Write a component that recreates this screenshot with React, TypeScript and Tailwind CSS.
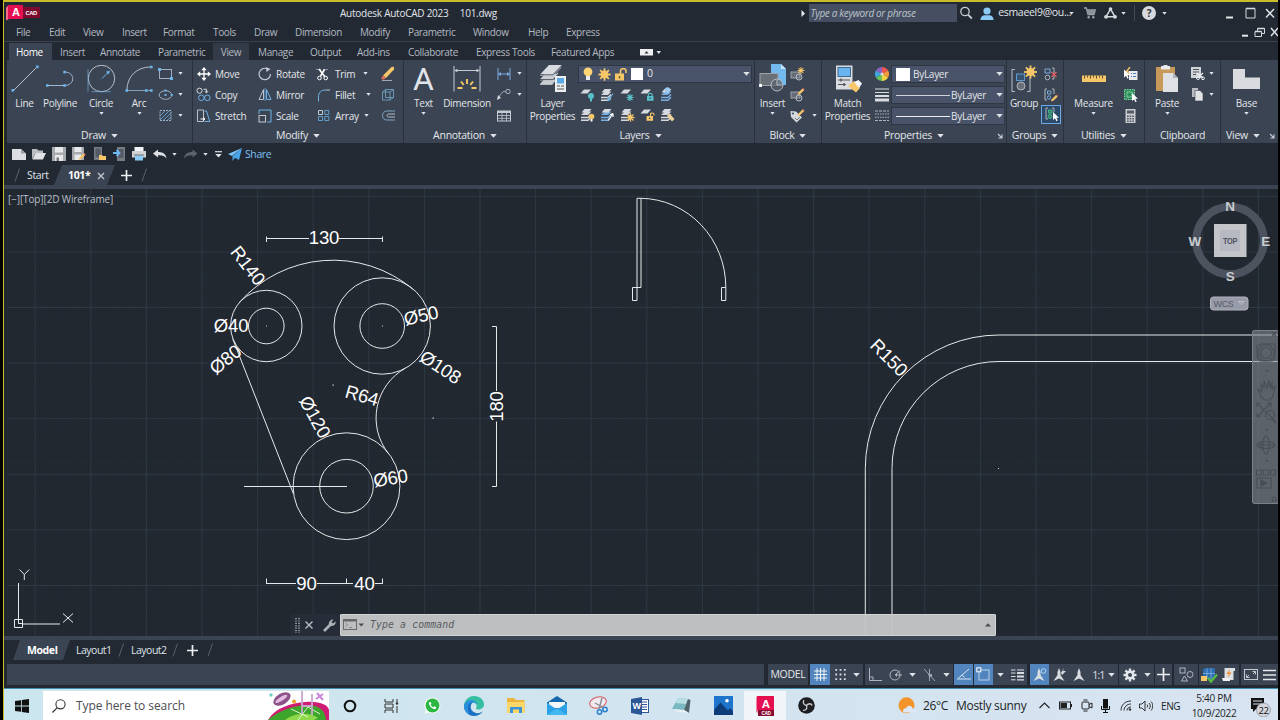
import type { ReactNode } from 'react';

type SvgProps = { w: number; h: number; children: ReactNode; className?: string };

function Svg({ w, h, children, className = '' }: SvgProps) {
  return (
    <svg width={w} height={h} viewBox={`0 0 ${w} ${h}`} fill="none" className={`shrink-0 ${className}`}>
      {children}
    </svg>
  );
}

function Caret({ big = false }: { big?: boolean }) {
  return big ? (
    <Svg w={7} h={4}><path d="M0.3 0H6.7L3.5 3.8Z" fill="#dfe3e8" /></Svg>
  ) : (
    <Svg w={5} h={3}><path d="M0.3 0H4.7L2.5 2.8Z" fill="#dfe3e8" /></Svg>
  );
}

const BLUE = '#6db3e8';
const LIGHT = '#d6dade';
const GOLD = '#f6c768';

/* ---------- title bar + menus ---------- */

const menus = [
  ['File', 'w-[33px]'], ['Edit', 'w-[34px]'], ['View', 'w-[39px]'], ['Insert', 'w-[41px]'], ['Format', 'w-[50px]'],
  ['Tools', 'w-[41px]'], ['Draw', 'w-[41px]'], ['Dimension', 'w-[65px]'], ['Modify', 'w-[48px]'],
  ['Parametric', 'w-[65px]'], ['Window', 'w-[55px]'], ['Help', 'w-[38px]'], ['Express', 'w-[50px]'],
];

const tabs = [
  ['Home', 'w-[43px] mr-px bg-[#3b4453] text-white'], ['Insert', 'w-[40px]'], ['Annotate', 'w-[58px]'],
  ['Parametric', 'w-[62px]'], ['View', 'w-[36px] bg-[#333b49]'], ['Manage', 'w-[55px]'], ['Output', 'w-[47px]'],
  ['Add-ins', 'w-[51px]'], ['Collaborate', 'w-[68px]'], ['Express Tools', 'w-[75px]'], ['Featured Apps', 'w-[70px]'],
];

function TitleBar() {
  return (
    <div className="flex h-[22px] items-center text-[#e3e6ea]">
      <div className="ml-[2px] flex items-center">
        <Svg w={34} h={16}>
          <path d="M1 1.5 3 0V14L0 15.5V3Z" fill="#f06a8c" />
          <rect x="2" width="15" height="14" fill="#e51050" />
          <rect x="17" y="2" width="17" height="11" fill="#7a0b2e" />
          <text x="9.8" y="11" textAnchor="middle" fontSize="11" fontWeight="700" fill="#fff" fontFamily="Liberation Sans, sans-serif">A</text>
          <text x="25.2" y="9.7" textAnchor="middle" fontSize="5.8" fontWeight="700" fill="#fff" fontFamily="Liberation Sans, sans-serif">CAD</text>
        </Svg>
      </div>
      <span className="ml-[300px] w-[121px] tracking-[-0.25px]">Autodesk AutoCAD 2023</span>
      <span className="w-[345px] tracking-[-0.3px]">101.dwg</span>
      <Svg w={4} h={7} className="-ml-px"><path d="M0.5 0 4 3.5 0.5 7Z" fill="#e8eaed" /></Svg>
      <div className="ml-[4px] flex h-[18px] w-[150px] items-center bg-[#454f61] pl-[2px] italic tracking-[-0.35px] text-[#bcc2cb]">Type a keyword or phrase</div>
      <Svg w={14} h={14} className="ml-[2px]">
        <circle cx="6" cy="5.5" r="4.2" stroke="#c8ccd1" strokeWidth="1.3" /><path d="m9 8.7 3.8 3.8" stroke="#c8ccd1" strokeWidth="1.8" />
      </Svg>
      <Svg w={14} h={13} className="ml-[7px]">
        <circle cx="7" cy="4" r="3.6" fill="#8ccaf6" /><path d="M0.5 13C0.5 9.5 3 8.2 5 8.2H9C11 8.2 13.5 9.5 13.5 13Z" fill="#8ccaf6" />
      </Svg>
      <span className="ml-[4px] w-[71px] text-[10.5px] tracking-[-0.3px]">esmaeel9@ou...</span>
      <Caret />
      <Svg w={12} h={12} className="ml-[10px]">
        <path d="M0 1H2.3L4 7.5H10L11.3 2.8H3" stroke="#9da3ab" strokeWidth="1.3" /><path d="M3 3H11L9.8 7H4Z" fill="#8d939b" />
        <circle cx="4.7" cy="10.3" r="1.2" fill="#9da3ab" /><circle cx="9.3" cy="10.3" r="1.2" fill="#9da3ab" />
      </Svg>
      <Svg w={13} h={12} className="ml-[8px]">
        <path d="M6.5 2 2 9.8H11Z" stroke="#d6d9dd" strokeWidth="1.5" /><circle cx="6.5" cy="2" r="1.8" fill="#d6d9dd" />
        <circle cx="2" cy="9.8" r="1.9" fill="#d6d9dd" /><circle cx="11" cy="9.8" r="1.9" fill="#d6d9dd" />
      </Svg>
      <div className="ml-[4px]"><Caret /></div>
      <div className="ml-[8px] h-[16px] w-px bg-[#414a58]" />
      <div className="ml-[7px] flex h-[14px] w-[14px] items-center justify-center rounded-full bg-[#d6d9dd] text-[10px] font-bold text-[#333]">?</div>
      <div className="ml-[6px]"><Caret /></div>
      <Svg w={52} h={14} className="ml-[59px]">
        <path d="M0 11.5H7" stroke="#e3e6ea" strokeWidth="2" /><path d="M20 2.5H29V12H20Z" stroke="#d6d9dd" strokeWidth="1" /><path d="M20 2.5H29" stroke="#d6d9dd" strokeWidth="1.6" />
        <path d="M40 3 48 11.5M48 3 40 11.5" stroke="#e3e6ea" strokeWidth="1.4" />
      </Svg>
    </div>
  );
}

function MenuBar() {
  return (
    <div className="flex h-[18px] items-center border-b border-[#3a424f] pl-[12px] tracking-[-0.37px] text-[#b3b9c2]">
      {menus.map(([name, cls]) => <span key={name} className={`${cls} shrink-0 pb-px`}>{name}</span>)}
      <Svg w={36} h={12} className="ml-auto">
        <path d="M0 8.7H6" stroke="#e3e6ea" strokeWidth="2" />
        <path d="M15.5 4V1.5H22.5V6.5H20" stroke="#d6d9dd" /><path d="M13 4.5H19.5V9.5H13Z" stroke="#d6d9dd" /><path d="M13 4.5H19.5M15.5 1.5H22.5" stroke="#d6d9dd" strokeWidth="1.6" />
        <path d="m29 1 7 8M36 1 29 9" stroke="#e3e6ea" strokeWidth="1.4" />
      </Svg>
    </div>
  );
}

function RibbonTabs() {
  return (
    <div className="flex h-[20px] items-end pl-[5px] tracking-[-0.35px] text-[#b3b9c2]">
      <div className="flex h-[17px]">
        {tabs.map(([name, cls], i) => (
          <span key={name} className={`${cls} flex shrink-0 items-center pt-[2px] ${i === 4 ? 'justify-center' : 'pl-[7px]'} ${i === 5 ? '-mr-px pl-[9px]' : ''}`}>{name}</span>
        ))}
        <Svg w={22} h={17} className="ml-[26px]">
          <rect y="6" width="13" height="6.5" fill="#eceef0" /><path d="m4.5 10.6 2-2.6 2 2.6Z" fill="#333" /><path d="M16.5 8H21L18.8 11Z" fill="#dfe3e8" />
        </Svg>
      </div>
    </div>
  );
}

/* ---------- ribbon building blocks ---------- */

function Panel({ title, className, children, arrow = true, launcher = false }: { title: string; className: string; children: ReactNode; arrow?: boolean; launcher?: boolean }) {
  return (
    <div className={`flex h-[83px] shrink-0 flex-col border-r border-[#2a313c] ${className}`}>
      <div className="flex h-[67px]">{children}</div>
      <div className="relative flex h-[16px] items-center justify-center gap-[5px] pt-[2px] text-[10.5px]">
        {title}
        {arrow && <Caret big />}
        {launcher && (
          <Svg w={6} h={6} className="absolute right-[3px]"><path d="M1 1 4.5 4.5M5 1.5V5H1.5" stroke="#c9ced6" strokeWidth="1.1" /></Svg>
        )}
      </div>
    </div>
  );
}

function Big({ icon, label, label2, className, caret = false }: { icon: ReactNode; label: string; label2?: string; className: string; caret?: boolean }) {
  return (
    <div className={`flex shrink-0 flex-col items-center pt-[4px] ${className}`}>
      <div className="flex h-[32px] items-start justify-center">{icon}</div>
      <span className="h-[13px] leading-[14px]">{label}</span>
      {label2 && <span className="h-[13px] leading-[14px]">{label2}</span>}
      {caret && <div className="mt-[3px]"><Caret /></div>}
    </div>
  );
}

function Stack({ className, children }: { className: string; children: ReactNode }) {
  return <div className={`flex shrink-0 flex-col pt-[3px] ${className}`}>{children}</div>;
}

function Row({ icon, label, caret, className = '' }: { icon: ReactNode; label?: string; caret?: boolean; className?: string }) {
  return (
    <div className={`flex h-[21px] items-center ${className}`}>
      <span className="flex w-[15px] shrink-0 justify-center">{icon}</span>
      {label && <span className="ml-[4px] shrink-0 pt-px">{label}</span>}
      {caret && <span className="ml-auto"><Caret /></span>}
    </div>
  );
}

/* stack of sheets used by most of the layer tools */
function Sheets({ badge, single = false, tint = LIGHT }: { badge: ReactNode; single?: boolean; tint?: string }) {
  return (
    <Svg w={15} h={15}>
      {!single && <path d="M1 10.5H8L11 7.5M1 13.2H8L11 10.2" stroke={tint} strokeWidth="1.4" />}
      {!single && <path d="M1 8H8L11.5 4.5H5Z" fill={tint} />}
      <path d={single ? 'M0.5 6.5 4 2.5H11L7.5 6.5Z' : 'M1.5 5.5 4.5 2H11.5L8.5 5.5Z'} fill={LIGHT} />
      {badge}
    </Svg>
  );
}

function Lock({ color, x, y, open = false }: { color: string; x: number; y: number; open?: boolean }) {
  return (
    <g transform={`translate(${x} ${y})`}>
      <rect y="3" width="6.5" height="4.8" fill={color} />
      <path d={open ? 'M4 3V1.2C4 -0.4 7.5 -0.4 7.5 1.2V2.5' : 'M1.3 3V1.5C1.3 0 5.2 0 5.2 1.5V3'} stroke={color} strokeWidth="1.1" />
      <circle cx="3.2" cy="5.3" r="0.8" fill="#3b4453" />
    </g>
  );
}

function Sun({ cx, cy, r, color = GOLD }: { cx: number; cy: number; r: number; color?: string }) {
  return (
    <g stroke={color} strokeWidth={r * 0.28}>
      <circle cx={cx} cy={cy} r={r * 0.5} fill={color} stroke="none" />
      {[0, 45, 90, 135].map((a) => (
        <path key={a} d={`M${cx - r} ${cy}H${cx + r}`} transform={`rotate(${a} ${cx} ${cy})`} />
      ))}
    </g>
  );
}

function Pencil({ x, y }: { x: number; y: number }) {
  return (
    <g transform={`translate(${x} ${y})`}>
      <path d="M0 7 0.8 4.8 5 0.6 6.6 2.2 2.3 6.3Z" fill={GOLD} /><path d="M5 0.6 5.8 0 7.2 1.4 6.6 2.2Z" fill="#e3705f" />
    </g>
  );
}

function Cursor({ x, y }: { x: number; y: number }) {
  return <path transform={`translate(${x} ${y})`} d="M0 0V8L2 6.3 3.4 9.2 4.7 8.5 3.4 5.8H6Z" fill="#fff" />;
}

function Combo({ children, className }: { children: ReactNode; className: string }) {
  return (
    <div className={`flex h-[18px] items-center border border-[#2f3744] bg-[#49546a] ${className}`}>
      {children}
      <span className="ml-auto mr-[1px]"><Caret big /></span>
    </div>
  );
}

/* ---------- ribbon panels ---------- */

function DrawPanel() {
  return (
    <Panel title="Draw" className="w-[186px]">
      <Big className="w-[35px]" label="Line" icon={
        <Svg w={28} h={28}><path d="M2 27 26 3" stroke="#b8c0ca" /><rect x="0.5" y="25" width="2.6" height="2.6" fill={BLUE} /><rect x="25" y="1.5" width="2.6" height="2.6" fill={BLUE} /></Svg>
      } />
      <Big className="w-[36px]" label="Polyline" icon={
        <Svg w={28} h={28}><path d="M1 21.5H18.5C29.5 21.5 29.5 8 18.5 8" stroke="#9fb7cf" /><rect y="20.2" width="2.6" height="2.6" fill={BLUE} /><rect x="17.3" y="20.2" width="2.6" height="2.6" fill={BLUE} /><rect x="17.3" y="6.8" width="2.6" height="2.6" fill={BLUE} /></Svg>
      } />
      <Big className="w-[46px]" label="Circle" caret icon={
        <Svg w={29} h={29}><circle cx="14.5" cy="14.5" r="13.2" stroke="#b8c0ca" /><path d="M1 5V27.5M4.5 27.7H24" stroke={BLUE} strokeOpacity=".65" /><path d="m15 14.5 6.5-6.5" stroke={BLUE} /><path d="M23 6.5 19 7.7 21.8 10.5Z" fill={BLUE} /></Svg>
      } />
      <Big className="w-[30px]" label="Arc" caret icon={
        <Svg w={28} h={28}><path d="M2 26.5C2 13 11 3 26 3" stroke="#b8c0ca" /><path d="M2 26.5H25" stroke="#8da7bf" strokeWidth=".9" /><rect x="25" y="1.7" width="2.6" height="2.6" fill={BLUE} /><rect x="0.5" y="25.2" width="2.6" height="2.6" fill={BLUE} /><rect x="20" y="25.2" width="2.6" height="2.6" fill={BLUE} /><rect x="25" y="25.2" width="2.6" height="2.6" fill={BLUE} /></Svg>
      } />
      <Stack className="ml-[4px] w-[25px]">
        <Row caret icon={<Svg w={15} h={12}><rect x="1.5" y="1.5" width="12" height="9" stroke="#9eb0c2" /><path d="M0 0H3V3H0ZM12 9H15V12H12Z" fill={BLUE} /></Svg>} />
        <Row caret icon={<Svg w={15} h={12}><ellipse cx="7.5" cy="6" rx="6.3" ry="4.3" stroke="#9eb0c2" /><path d="M6.5 5H8.5V7H6.5ZM12.7 5H14.7V7H12.7ZM6.5 .5H8.5V2.5H6.5Z" fill={BLUE} /></Svg>} />
        <Row caret icon={<Svg w={15} h={13}><rect x="2" y="1.5" width="11" height="10" stroke="#9eb0c2" strokeDasharray="2 1" /><path d="M2 7 7 2M2 11 11 2M5 11.5 13 4M9 11.5 13 8" stroke={BLUE} strokeWidth=".8" /></Svg>} />
      </Stack>
    </Panel>
  );
}

function ModifyPanel() {
  return (
    <Panel title="Modify" className="w-[211px]">
      <Stack className="ml-[3px] w-[61px]">
        <Row label="Move" icon={<Svg w={14} h={14}><path d="M7 1.5V12.5M1.5 7H12.5" stroke="#fff" strokeWidth="1.3" /><path d="M7 0 9.7 3.2H4.3ZM7 14 4.3 10.8H9.7ZM0 7 3.2 4.3V9.7ZM14 7 10.8 9.7V4.3Z" fill="#fff" /></Svg>} />
        <Row label="Copy" icon={<Svg w={15} h={15}><circle cx="3.5" cy="3.7" r="2.6" stroke={LIGHT} /><circle cx="5.3" cy="10.8" r="2.8" stroke={BLUE} /><circle cx="11.3" cy="10.8" r="2.8" stroke={BLUE} /><path d="M7.5 2.3H10.5V5M9 4.2 10.5 6 12 4.2" stroke={LIGHT} /></Svg>} />
        <Row label="Stretch" icon={<Svg w={15} h={14}><path d="M1.5 1H7.5V12.5H1.5Z" stroke="#b9c1ca" /><path d="M8.5 2H10.5L13.8 12.5H8.5" stroke={BLUE} /><path d="M4.5 10H8M7 8.3 9 10 7 11.7" stroke="#fff" /></Svg>} />
      </Stack>
      <Stack className="w-[59px]">
        <Row label="Rotate" icon={<Svg w={14} h={14}><path d="M9 1.7A5.7 5.7 0 1 0 12.5 7" stroke="#c3cad2" strokeWidth="1.2" /><path d="M8 0 12.5 2 8.5 5Z" fill="#c3cad2" /></Svg>} />
        <Row label="Mirror" icon={<Svg w={14} h={13}><path d="M5.5 1.5V11.5H1Z" stroke="#b9c1ca" /><path d="M8.5 1.5V11.5H13Z" stroke={BLUE} /><path d="M7 0V13" stroke={BLUE} strokeWidth=".7" /></Svg>} />
        <Row label="Scale" icon={<Svg w={14} h={14}><path d="M1 5V1H13V13H9" stroke={BLUE} /><rect x="1" y="6.5" width="6.5" height="6.5" stroke="#c3cad2" /></Svg>} />
      </Stack>
      <Stack className="w-[53px]">
        <Row label="Trim" caret className="pr-px" icon={<Svg w={15} h={14}><path d="M0 2.5H14" stroke="#8494a5" strokeDasharray="5 2" /><path d="m3 2 6 8M8.5 2.5 4.5 9" stroke="#fff" strokeWidth="1.6" /><circle cx="3.5" cy="11" r="1.8" stroke="#fff" /><circle cx="9.7" cy="11" r="1.8" stroke="#fff" /></Svg>} />
        <Row label="Fillet" caret className="-mr-[2px]" icon={<Svg w={14} h={14}><path d="M1.5 13.5V9C1.5 4.5 4 2 8.5 2" stroke={BLUE} /><path d="M8.5 2H13" stroke="#b9c1ca" /></Svg>} />
        <Row label="Array" caret icon={<Svg w={14} h={13}><path d="M1.5 1.5H5.5V5.5H1.5Z" stroke="#c3cad2" /><path d="M7.8 1.5H11.8V5.5H7.8ZM1.5 7.5H5.5V11.5H1.5ZM7.8 7.5H11.8V11.5H7.8Z" stroke={BLUE} strokeOpacity=".8" /></Svg>} />
      </Stack>
      <Stack className="ml-[11px] w-[16px]">
        <Row icon={<Svg w={15} h={15}><path d="M3 9.5 11.5 1 14 0.8V3.5L6 12Z" fill={GOLD} /><path d="M3 9.5 6 12 4 13.5H2L1.2 12Z" fill="#e66a58" /><path d="M2 14.5H12" stroke="#b9c1ca" strokeWidth=".8" /></Svg>} />
        <Row icon={<Svg w={14} h={14}><path d="M1.5 4H9V12H1.5ZM4.5 1.5H12.5V9.5L9 12M1.5 4 4.5 1.5M9 4 12.5 1.5M4.5 1.5V9.5H12.5" stroke="#6fa0bf" strokeWidth=".9" /></Svg>} />
        <Row icon={<Svg w={14} h={11}><path d="M14 1H6C0 1 0 10 6 10H14" stroke="#7fa2c0" /><path d="M14 4H7.5C5.5 4 5.5 7 7.5 7H14" stroke="#b5bec8" /></Svg>} />
      </Stack>
    </Panel>
  );
}

function AnnotationPanel() {
  return (
    <Panel title="Annotation" className="w-[123px]">
      <Big className="w-[39px]" label="Text" caret icon={<span className="font-['Roboto',sans-serif] text-[32px] leading-[30px] tracking-normal text-[#e1e4e8]">A</span>} />
      <Big className="w-[48px]" label="Dimension" icon={
        <Svg w={28} h={28}>
          <path d="M1 2V27.5M27 2V27.5M2 6.5H26" stroke="#c3cad2" /><path d="M1 6.5 4.5 4.7V8.3ZM27 6.5 23.5 4.7V8.3Z" fill="#c3cad2" />
          <path d="M14 15V20M8 17.5 10.7 21M20 17.5 17.3 21M4.5 24H9.5M18.5 24H23.5" stroke={GOLD} strokeWidth="1.9" />
        </Svg>
      } />
      <Stack className="ml-[5px] w-[26px]">
        <Row caret icon={<Svg w={14} h={12}><path d="M1 0V12M13 0V12M1 6H13" stroke="#7ba9de" /><path d="M1 6 4 4V8ZM13 6 10 4V8Z" fill="#7ba9de" /></Svg>} />
        <Row caret icon={<Svg w={14} h={13}><circle cx="11" cy="3.5" r="2.2" stroke="#aab2bc" /><path d="M9 4C6 2 4 6 2 9" stroke="#aab2bc" /><path d="m0 12 1-5 3 3Z" fill="#d3d7dc" /></Svg>} />
        <Row icon={<Svg w={14} h={12}><rect x=".5" y="1" width="13" height="10" stroke="#c3cad2" /><path d="M0 2H14" stroke="#c3cad2" strokeWidth="2" /><path d="M0 5.5H14M0 8.3H14M5 2V11M9.5 2V11" stroke="#c3cad2" strokeWidth=".8" /></Svg>} />
      </Stack>
    </Panel>
  );
}

function LayersPanel() {
  const teal = '#59bfc8';
  return (
    <Panel title="Layers" className="w-[228px]">
      <Big className="w-[51px]" label="Layer" label2="Properties" icon={
        <Svg w={28} h={30}>
          <path d="M1 20.5H13L17 15M1 16H13L19 9M1 11.5H14L22 3" stroke="#b3b8be" strokeWidth="1.2" />
          <path d="M1 20 5 15.5H17L13 20ZM1 15.3 6 10H19L14 15.3Z" fill="#c9cdd2" /><path d="M1 10.5 10 1H23L14 10.5Z" fill="#d9dce0" />
          <path d="M1 10.8H14L23 1.4M1 15.6H14L19 10.3" stroke="#3b4453" strokeWidth=".8" />
          <rect x="16" y="12" width="11" height="16" fill="#eceef0" /><rect x="18" y="14" width="7" height="5.5" fill="#58a9e6" /><path d="M18 22H21M22 22H25M18 25H25" stroke="#555" strokeWidth="1.1" />
        </Svg>
      } />
      <div className="flex flex-col pt-[5px]">
        <Combo className="w-[174px] pl-[4px]">
          <Svg w={10} h={14}><circle cx="5" cy="4.8" r="4.4" fill="#ffd475" /><path d="M3 9H7V13H3Z" fill="#e8eaed" /></Svg>
          <Svg w={13} h={13} className="ml-[5px]"><Sun cx={6.5} cy={6.5} r={6.2} /><circle cx="6.5" cy="6.5" r="4" fill={GOLD} /></Svg>
          <Svg w={14} h={13} className="ml-[3px]"><rect x="1" y="5.5" width="9" height="7" fill={GOLD} /><path d="M6.5 6V3C6.5 0 12 0 12 3V5" stroke={GOLD} strokeWidth="1.6" /><path d="M5.5 8V10.5" stroke="#6b5a2c" strokeWidth="1.4" /></Svg>
          <span className="ml-[3px] h-[12px] w-[12px] bg-white" /><span className="ml-[4px] text-[10.5px]">0</span>
        </Combo>
        <div className="mt-px flex h-[20px] items-center gap-[5px] pl-[2px]">
          <Sheets single badge={<g><circle cx="11" cy="9" r="3" fill={teal} /><path d="M11 11V14.5" stroke={teal} strokeWidth="2" /></g>} />
          <Sheets badge={<path d="M8 13.5 13 6.5M8 13.5V10M8 13.5 11 12.5" stroke={BLUE} strokeWidth="1.2" />} />
          <Sheets single badge={<g stroke={teal} strokeWidth="1.2"><path d="M10 7V14M6.5 10.5H13.5M7.5 8 12.5 13M12.5 8 7.5 13" /></g>} />
          <Sheets single badge={<Lock color={teal} x={7} y={6} />} />
          <Sheets tint="#78afe0" badge={<circle cx="7.5" cy="3" r="2.7" fill="#9cc9ef" />} />
        </div>
        <div className="flex h-[21px] items-center gap-[5px] pl-[2px]">
          <Sheets badge={<g><circle cx="11.5" cy="9.5" r="2.8" fill={GOLD} /><path d="M11.5 12V14.5" stroke="#fff" strokeWidth="2" /></g>} />
          <Sheets tint="#78afe0" badge={<path d="M8 13.5 13 6.5M13 6.5V10M13 6.5 10 7.5" stroke="#fff" strokeWidth="1.2" />} />
          <Sheets badge={<Sun cx={10.5} cy={10.5} r={4.2} />} />
          <Sheets single badge={<Lock color={GOLD} x={6.5} y={6} open />} />
          <Sheets badge={<path d="M7 9 9.5 6.5 14.5 12 12 14.5Z" fill="#ecd29b" />} />
        </div>
      </div>
    </Panel>
  );
}

function BlockPanel() {
  return (
    <Panel title="Block" className="w-[67px]">
      <Big className="w-[35px]" label="Insert" caret icon={
        <Svg w={28} h={28}>
          <path d="M12 0H22L27 5V21H12Z" fill="#73b9ee" /><path d="M22 0V5H27Z" fill="#c5e2f8" />
          <rect x="1" y="9.5" width="18" height="12" fill="#6b7078" stroke="#9da2a9" /><circle cx="18" cy="21" r="6" fill="#5b616b" fillOpacity=".7" stroke="#b9bec5" /><path d="M18 16V21H23" stroke="#b9bec5" /><rect y="20" width="3" height="3" fill="#fff" />
        </Svg>
      } />
      <Stack className="w-[28px]">
        <Row icon={<Svg w={15} h={14}><rect x="1" y="5" width="9" height="6" fill="#666c75" stroke="#9da2a9" /><circle cx="9" cy="10" r="3" stroke="#b9bec5" /><Sun cx={11} cy={3.5} r={3.5} /></Svg>} />
        <Row icon={<Svg w={15} h={14}><rect x="1" y="4" width="9" height="6" fill="#666c75" stroke="#9da2a9" /><circle cx="9" cy="10" r="3" stroke="#b9bec5" /><Pencil x={7.5} y={0} /></Svg>} />
        <Row caret className="pr-px" icon={<Svg w={15} h={14}><path d="M0.5 2 6 2.5 12 8.5 6.5 13.5 1 8Z" fill="#d6d9dd" /><circle cx="3" cy="4.5" r="1" fill="#3b4453" /><path d="m5 9 2 2 3-3" stroke="#777" /><Pencil x={7.5} y={0} /></Svg>} />
      </Stack>
    </Panel>
  );
}

function PropertiesPanel() {
  return (
    <Panel title="Properties" className="w-[185px]" launcher>
      <Big className="w-[51px]" label="Match" label2="Properties" icon={
        <Svg w={28} h={29}>
          <rect x="2" y="1.5" width="16.5" height="24" fill="#d9dce0" /><rect x="4" y="3.5" width="12.5" height="9" fill="#69b4ee" stroke="#3f6a92" /><path d="M4 16H16M4 20.5H12" stroke="#555" /><path d="M7 14.5V17.5M10 19V22" stroke="#555" strokeWidth="1.5" />
          <path d="M14 22 20 17 26 24 22 28.5Z" fill={GOLD} /><path d="M20 18 24.5 16 28 19.5 25 24Z" fill="#f3f4f5" />
        </Svg>
      } />
      <div className="flex w-[18px] flex-col items-center pt-[3px]">
        <div className="flex h-[21px] items-center">
          <Svg w={14} h={14}>
            {['#f0554e', '#f59a3c', '#f3d544', '#67c05a', '#3fa6d8', '#8a62c8'].map((c, i) => (
              <path key={c} d="M7 7V0A7 7 0 0 1 13.06 3.5Z" fill={c} transform={`rotate(${i * 60} 7 7)`} />
            ))}
            <circle cx="7" cy="7" r="1.6" fill="#d6d9dd" />
          </Svg>
        </div>
        <div className="flex h-[21px] items-center"><Svg w={14} h={14}><path d="M0 1H14M0 4.5H14" stroke="#d9dce0" /><path d="M0 8H14" stroke="#d9dce0" strokeWidth="2" /><path d="M0 12H14" stroke="#d9dce0" strokeWidth="3" /></Svg></div>
        <div className="flex h-[21px] items-center"><Svg w={14} h={12}><path d="M0 1H14M0 10.5H14" stroke="#aeb5be" strokeDasharray="3 1" /><path d="M0 4H14M0 7.3H14" stroke="#aeb5be" strokeDasharray="1.5 1" /></Svg></div>
      </div>
      <div className="flex flex-col gap-[3px] pt-[5px]">
        <Combo className="w-[114px] pl-[4px]"><span className="h-[13px] w-[14px] bg-white" /><span className="ml-[3px]">ByLayer</span></Combo>
        <Combo className="w-[114px] pl-[4px]"><span className="h-px w-[54px] bg-[#cfd3d8]" /><span className="ml-[1px]">ByLayer</span></Combo>
        <Combo className="w-[114px] pl-[4px]"><span className="h-px w-[54px] bg-[#eceef0]" /><span className="ml-[1px]">ByLayer</span></Combo>
      </div>
    </Panel>
  );
}

function GroupsPanel() {
  return (
    <Panel title="Groups" className="w-[57px]">
      <Big className="w-[34px]" label="Group" icon={
        <Svg w={27} h={29}>
          <path d="M4 5.5H1V27.5H4M16 27.5H19V13" stroke="#aeb5be" strokeWidth="1.1" /><rect x="5.5" y="10" width="8" height="6.5" fill="#35526f" stroke="#5c9ad0" /><circle cx="10" cy="22" r="4" fill="#6b7078" stroke="#aeb5be" /><Sun cx={19.5} cy={8} r={6.5} /><circle cx="19.5" cy="8" r="4" fill={GOLD} />
        </Svg>
      } />
      <Stack className="w-[20px] items-center">
        <Row icon={<Svg w={14} h={14}><path d="M1 2H6V6H1Z" stroke="#7ba9de" /><circle cx="3.5" cy="10.5" r="2.3" stroke="#aeb5be" /><path d="M8 1H10V12H8" stroke="#aeb5be" /><path d="m7.5 5 5 5M12.5 5 7.5 10" stroke="#e0585f" strokeWidth="1.4" /></Svg>} />
        <Row icon={<Svg w={14} h={14}><path d="M3 1H1V12H3M8 1H10V6" stroke="#aeb5be" /><path d="M3.5 3H7V6H3.5Z" stroke="#7ba9de" /><circle cx="5" cy="9.5" r="1.7" stroke="#7ba9de" /><Pencil x={7} y={6.5} /></Svg>} />
        <div className="flex h-[19px] w-[20px] shrink-0 items-center justify-center border border-[#69aae6] bg-[#2c4a68]">
          <Svg w={15} h={15}><path d="M4 1H2V12H4M8 1H10V5" stroke="#aeb5be" /><path d="M4.5 3H8V6H4.5Z" fill="#2f7f62" stroke="#4fb58c" /><circle cx="6" cy="9.5" r="2" fill="#2f7f62" stroke="#4fb58c" /><Cursor x={9} y={5} /></Svg>
        </div>
      </Stack>
    </Panel>
  );
}

function UtilitiesPanel() {
  return (
    <Panel title="Utilities" className="w-[81px]">
      <Big className="w-[59px]" label="Measure" caret icon={
        <Svg w={24} h={28}><rect y="11.5" width="24" height="6.5" fill="#f6c768" /><path d="M2.5 11.5V14.5M5.5 11.5V13.5M8.5 11.5V14.5M11.5 11.5V13.5M14.5 11.5V14.5M17.5 11.5V13.5M20.5 11.5V14.5" stroke="#5e5030" /></Svg>
      } />
      <Stack className="w-[18px]">
        <Row icon={<Svg w={15} h={14}><path d="M7 0 3 5H6L4 8" stroke={GOLD} strokeWidth="1.4" /><rect x="6" y="4" width="8.5" height="9" fill="#e9ebee" /><path d="M8 6.5H9M10 6.5H13M8 9.5H9M10 9.5H13" stroke="#4b7eb0" /><Cursor x={1} y={2.5} /></Svg>} />
        <Row icon={<Svg w={15} h={14}><rect x="1.5" y="1.5" width="10" height="10" fill="#2f8f5b" stroke="#7fd3a2" strokeDasharray="1.5 1" /><rect x="4" y="4" width="5" height="5" stroke="#9be0b8" strokeWidth=".7" /><Cursor x={9} y={5} /></Svg>} />
        <Row icon={<Svg w={11} h={14}><rect x=".5" width="10" height="14" fill="#c9ccd1" /><rect x="2" y="1.5" width="7" height="3" fill="#555b65" /><path d="M2 7.2H9M2 9.7H9M2 12.2H9" stroke="#555b65" strokeWidth="1.4" strokeDasharray="1.7 .9" /></Svg>} />
      </Stack>
    </Panel>
  );
}

function ClipboardPanel() {
  return (
    <Panel title="Clipboard" className="w-[76px]" arrow={false}>
      <Big className="w-[44px]" label="Paste" caret icon={
        <Svg w={23} h={29}><rect y="3" width="19" height="24" fill="#c89a5a" /><path d="M5 2H7C7 .5 12 .5 12 2H14V5.5H5Z" fill="#e9ebee" /><path d="M7 9H17L22 14V28H7Z" fill="#dfe1e5" /><path d="M17 9V14H22Z" fill="#b0b4ba" /></Svg>
      } />
      <Stack className="ml-[1px] w-[26px]">
        <Row caret className="pr-[2px]" icon={<Svg w={15} h={15}><path d="M1 1H11V12H1Z" fill="#cfd2d7" /><path d="M3 3.5H9M3 6H9M3 8.5H6" stroke="#555" /><path d="m7 7 6 5M13 7 8 11.5" stroke="#eceef0" strokeWidth="1.3" /><circle cx="8" cy="12" r="1.5" stroke="#eceef0" /><circle cx="13" cy="12.3" r="1.4" stroke="#eceef0" /></Svg>} />
        <Row caret className="pr-[2px]" icon={<Svg w={15} h={15}><path d="M2 1H8V10H2Z" fill="#b9bdc3" /><path d="M5 3.5H10L13 6.5V14H5Z" fill="#e1e3e7" stroke="#3b4453" strokeWidth=".6" /></Svg>} />
      </Stack>
    </Panel>
  );
}

function Ribbon() {
  return (
    <div className="ml-[3px] flex h-[83px] bg-[#3b4453] tracking-[-0.28px] text-[#e3e6ea]">
      <DrawPanel />
      <ModifyPanel />
      <AnnotationPanel />
      <LayersPanel />
      <BlockPanel />
      <PropertiesPanel />
      <GroupsPanel />
      <UtilitiesPanel />
      <ClipboardPanel />
      <Panel title="View" className="w-[57px] border-r-0 [&>div:last-child]:pr-[13px]" launcher>
        <Big className="w-[51px]" label="Base" caret icon={<Svg w={27} h={28}><path d="M0 5H12V13.5H27V25H0Z" fill="#d9dbdf" /></Svg>} />
      </Panel>
    </div>
  );
}

/* ---------- quick access + file tabs ---------- */

function QuickAccess() {
  return (
    <div className="flex h-[22px] items-center pl-[8px] text-[#e3e6ea]">
      <div className="flex items-center gap-[6px]">
        <Svg w={14} h={12}><path d="M0 1H9L14 5.5V12H0Z" fill="#dcdee1" /><path d="M9 1V5.5H14Z" fill="#999ea5" /></Svg>
        <Svg w={14} h={12}><path d="M0 11.5V1H5L6.5 2.5H11V5H3.5Z" fill="#b9bcc1" /><path d="M3.5 5H14L11 11.5H.5Z" fill="#e0e2e5" /></Svg>
        <Svg w={14} h={14}><path d="M0 0H14V14H0Z" fill="#a6a9ae" /><path d="M3 0H11V5.5H3ZM3 8H11V14H3Z" fill="#e8e9eb" /><path d="M4.5 10.5H7V14H4.5Z" fill="#777" /></Svg>
        <Svg w={15} h={14}><path d="M0 0H12V13H0Z" fill="#a6a9ae" /><path d="M2.5 0H9.5V5H2.5ZM2.5 7.5H9V13H2.5Z" fill="#e8e9eb" /><Pencil x={6.5} y={6} /></Svg>
        <Svg w={14} h={14}><path d="M1 0H9V13H1Z" fill="#777c83" /><path d="M2.5 1.5H7.5V10H2.5Z" fill="#555b65" /><path d="M6 8H9L10 9H13V13H6Z" fill={GOLD} /></Svg>
        <Svg w={13} h={14}><path d="M4 0H12V14H4Z" fill="#777c83" /><path d="M5.5 2H10.5V11H5.5Z" fill="#555b65" /><path d="M0 6H6M3.5 3 6.5 6 3.5 9" stroke="#6db9f0" strokeWidth="1.8" /></Svg>
        <Svg w={14} h={14}><path d="M2.5 0H11.5V4H2.5Z" fill="#f2f3f4" /><path d="M0 4H14V10.5H0Z" fill="#cfd1d4" /><path d="M3 8.5H11V13.5H3Z" fill="#8ccaf6" /><path d="M2 8H12" stroke="#555" strokeWidth=".8" /></Svg>
      </div>
      <Svg w={14} h={10} className="ml-[7px]"><path d="M0 4.5 5 .5V3C10 3 13 5 13.5 9.5C11.5 6.5 9 6 5 6.2V8.5Z" fill="#dcdee1" /></Svg>
      <div className="ml-[5px]"><Caret /></div>
      <Svg w={14} h={10} className="ml-[7px]"><path d="M13.5 4.5 8.5 .5V3C3.5 3 .5 5 0 9.5C2 6.5 4.5 6 8.5 6.2V8.5Z" fill="#5d646e" /></Svg>
      <div className="ml-[5px]"><Caret /></div>
      <Svg w={7} h={7} className="ml-[7px]"><path d="M0 .7H7" stroke="#dfe3e8" strokeWidth="1.2" /><path d="M.3 3H6.7L3.5 6.5Z" fill="#dfe3e8" /></Svg>
      <Svg w={14} h={13} className="ml-[6px]"><path d="M14 0 0 6 4 8Z" fill="#7cc4f7" /><path d="M14 0 4.5 8.3V13L7 9.7 11 12Z" fill="#4aa5e8" /></Svg>
      <span className="ml-[3px] pt-px text-[10.5px] text-[#7cc0f2]">Share</span>
    </div>
  );
}

function Slash() {
  return <Svg w={7} h={14}><path d="M1 13.5 5.5 .5" stroke="#59616d" /></Svg>;
}

function FileTabs() {
  return (
    <div className="flex h-[20px] items-center pl-[10px] text-[10.5px] tracking-[-0.33px] text-[#dfe3e8]">
      <Slash />
      <span className="ml-[6px] w-[27px] pt-[2px]">Start</span>
      <div className="flex h-full w-[61px] items-center bg-[#3b4453] pl-[14px] pt-px font-bold text-white [clip-path:polygon(8px_0,100%_0,calc(100%-8px)_100%,0_100%)]">
        101*
        <Svg w={8} h={8} className="ml-[7px]"><path d="m1 1 6 6M7 1 1 7" stroke="#c3c8cf" strokeWidth="1.3" /></Svg>
      </div>
      <Svg w={11} h={11} className="ml-[6px] mr-[9px]"><path d="M5.5 0V11M0 5.5H11" stroke="#eceef0" strokeWidth="1.7" /></Svg>
      <Slash />
    </div>
  );
}

/* ---------- drawing area ---------- */

const STEP = 55.6;
const dims = [
  ['130', 324, 237.5, 0], ['R140', 248, 265.5, 52], ['Ø40', 231, 325.5, 0], ['Ø80', 225.3, 359.5, -39],
  ['Ø50', 421, 315.5, -13], ['Ø108', 440.5, 367, 33], ['R64', 362, 395.5, 16], ['Ø120', 315, 417, 61],
  ['Ø60', 390.5, 478, -9], ['180', 496, 406.5, -90], ['90', 306.5, 583.5, 0], ['40', 364.5, 583.5, 0], ['R150', 889, 357.5, 45],
] as const;

function Drawing() {
  const lines = Array.from({ length: 125 }, (_, i) => i - 3);
  return (
    <svg width="1274" height="447" viewBox="4 189 1274 447" fill="none" className="block">
      <g strokeWidth="1">
        {lines.map((i) => (
          <g key={i} stroke={i % 5 === 0 ? '#303846' : '#242b36'}>
            <path d={`M${35.2 + (i * STEP) / 5} 189V636`} />
            {i < 42 && <path d={`M7 ${196.3 + (i * STEP) / 5}H1278`} />}
          </g>
        ))}
      </g>
      <g stroke="#e6e9ec" strokeWidth="1">
        <circle cx="266.3" cy="326" r="17.8" /><circle cx="266.3" cy="326" r="35.7" />
        <circle cx="382.2" cy="326" r="22.3" /><circle cx="382.2" cy="326" r="48.2" />
        <circle cx="346.5" cy="486.2" r="26.8" /><circle cx="346.5" cy="486.2" r="53.4" />
        <path d="M239.3 302.5A124.8 124.8 0 0 1 412.7 289" />
        <path d="M405.4 368.2A57 57 0 0 0 388.2 453.2" />
        <path d="M232.7 338.8 293.5 494" />
        <path d="M244 486.5H347" />
        <path d="M266.5 236.5V242M266.5 238.5H309M339 238.5H382M382.5 236.5V242" />
        <path d="M266.5 578.5V584M266.5 583.5H296M317 583.5H353M346.5 578.5V584M375 583.5H382.5M382.5 578.5V584" />
        <path d="M492 326.5H496.5V391M496.5 421.5V486.5H492" />
        <path d="M637 287.5V198.3H641V287.5M632.5 287.5H641M632.5 287.5V300.5H637V287.5" />
        <path d="M641 198.3A86 89 0 0 1 725.8 287.5M721.5 287.5H725.8V300.5H721.5Z" />
        <path d="M1278 335H999A133.8 133.8 0 0 0 865.3 468.5V636M1278 361.5H999A107 107 0 0 0 892 468.5V636" />
        <path d="M18.5 583V623.5M22.5 624H60M14.5 619.5H22.5V627.5H14.5ZM18.5 619.5V623.5H22.5M63 613.5 73 622.5M73 613.5 63 622.5M19.5 569.5 24.3 574.5 29.3 569.5M24.3 574.5V580" />
      </g>
      <path d="M266 325.5h1v1h-1zM382 325.5h1v1h-1zM332.5 384.5h1.3v1.3h-1.3zM432.5 417.5h1.3v1.3h-1.3zM998 468h1v1h-1z" fill="#cfd3d8" />
      <g fill="#fff" fontFamily="Liberation Sans, Arial, sans-serif" fontSize="18.6" textAnchor="middle">
        {dims.map(([t, x, y, a]) => (
          <text key={t + x} transform={`translate(${x} ${y}) rotate(${a})`} y="6.5" letterSpacing="-0.15">{t}</text>
        ))}
      </g>
    </svg>
  );
}

function ViewCube() {
  return (
    <svg width="86" height="122" viewBox="1187 195 86 122" className="absolute right-[5px] top-[6px]" fontFamily="Liberation Sans, Arial, sans-serif" fontWeight="700" textAnchor="middle">
      <circle cx="1230" cy="240.5" r="33.8" fill="none" stroke="#4d535e" strokeWidth="8" />
      <rect x="1214" y="224" width="32.5" height="33" fill="#c3c5c9" /><rect x="1220" y="230" width="20" height="21" fill="#b7b9c2" />
      <text x="1230" y="244" fontSize="8.5" fill="#50545f" textLength="14" lengthAdjust="spacingAndGlyphs">TOP</text>
      <g fontSize="13.5" fill="#c9cccf">
        <text x="1230" y="210.5">N</text><text x="1230" y="281">S</text><text x="1194.7" y="245.5">W</text><text x="1265.5" y="245.5">E</text>
      </g>
      <rect x="1210.5" y="297" width="37.5" height="13" rx="3" fill="#989ba8" stroke="#b0b3bd" />
      <text x="1223.5" y="307" fontSize="9" fontWeight="400" fill="#575b68">WCS</text><path d="M1238.5 301.5H1244L1241.3 304.5Z" fill="none" stroke="#c6c8d0" strokeWidth=".8" />
    </svg>
  );
}

function NavBar() {
  return (
    <div className="absolute right-0 top-[141px] h-[174px] w-[26px] rounded-l-[3px] border border-r-0 border-[#7b7f86] bg-[#84888f]/60">
      <svg width="25" height="172" viewBox="0 0 25 172" fill="none" stroke="#4a4e57" strokeWidth="1.1">
        <path d="m19 1 4 4M23 1l-4 4" />
        <path d="M4 15 8 13H22V27L19 30H7L4 26Z" /><circle cx="13" cy="22" r="5.5" /><circle cx="13" cy="22" r="8" />
        <path d="M5 58 8 66 12 69H17L20 65 22 55 19 58V51L17 57 16 49 14 57 11 50V57L8 53 9 61Z" />
        <path d="M4 72 20 88M18 72 4 86M4 76V72H8M14 72H18V76M4 82V86H8" /><circle cx="17" cy="84" r="4.5" /><path d="m20 88 3 4" strokeWidth="2" />
        <ellipse cx="13" cy="114" rx="9" ry="3.5" /><ellipse cx="13" cy="114" rx="3.2" ry="9" /><path d="M8 110V118M4 114H22" />
        <path d="M3.5 139H8.5V144H3.5ZM10.5 139H15.5V144H10.5ZM17.5 139H22.5V144H17.5ZM4 147H18V157H4Z" /><path d="M8 149 14 152 8 155Z" fill="#4a4e57" />
        <path d="M12 39h4l-2 2zM12 98h4l-2 2zM12 129h4l-2 2z" fill="#4a4e57" stroke="none" /><circle cx="21" cy="168" r="2" />
      </svg>
    </div>
  );
}

function CommandLine() {
  return (
    <div className="absolute bottom-0 left-[287px] flex h-[22px] w-[705px] items-center">
      <div className="flex h-full w-[49px] items-center bg-[#262d38]">
        <Svg w={5} h={15} className="ml-[4px]"><path d="M1 0V15M4 0V15" stroke="#b7bbc1" strokeWidth="1.3" strokeDasharray="1.2 1.2" /></Svg>
        <Svg w={8} h={8} className="ml-[5px]"><path d="m.5.5 7 7M7.5.5l-7 7" stroke="#b9bdc2" strokeWidth="1.4" /></Svg>
        <Svg w={13} h={13} className="ml-[10px]"><path d="m1 12 6-6" stroke="#aeb2b8" strokeWidth="2.6" /><path d="M6 6.5C5 3 8 0 10.5.5L8.5 3 10 4.5 12.5 2.5C13.5 5 10 8.5 6 6.5Z" fill="#aeb2b8" /></Svg>
      </div>
      <div className="flex h-[22px] w-[656px] items-center rounded-[1px] border border-[#d2d3d5] bg-[#c5c6c8]/95 pl-[2px]">
        <Svg w={22} h={12}>
          <rect x=".5" y=".5" width="13" height="10" stroke="#66696e" /><path d="M0 1.5H14" stroke="#66696e" strokeWidth="2" /><path d="m2.5 4 2 1.8-2 1.8M6 8.5H9" stroke="#777" strokeWidth=".8" /><path d="M15.5 4.5H21L18.2 7.5Z" fill="#4a4d52" />
        </Svg>
        <span className="ml-[5px] font-['DejaVu_Sans_Mono','Liberation_Mono',monospace] text-[9.8px] italic tracking-[0.12px] text-[#5a5d61]">Type a command</span>
        <Svg w={6} h={4} className="ml-auto mr-[4px]"><path d="M0 3.5 3 .3 6 3.5Z" fill="#4a4d52" /></Svg>
      </div>
    </div>
  );
}

function Viewport() {
  return (
    <div className="relative h-[447px] bg-[#212830]">
      <Drawing />
      <span className="absolute left-[4px] top-[3px] text-[10px] tracking-[-0.12px] text-[#b9bfc7]">[−][Top][2D Wireframe]</span>
      <ViewCube />
      <NavBar />
      <CommandLine />
    </div>
  );
}

/* ---------- layout tabs + status bar ---------- */

function LayoutTabs() {
  return (
    <div className="flex h-[20px] items-center pl-[9px] text-[10.5px] text-[#dfe3e8]">
      <div className="flex h-full w-[57px] items-center bg-[#3b4453] pl-[14px] pt-px font-bold text-white [clip-path:polygon(7px_0,100%_0,calc(100%-7px)_100%,0_100%)]">Model</div>
      <span className="ml-[6px] w-[42px] pt-px tracking-[-0.5px]">Layout1</span>
      <Slash />
      <span className="ml-[6px] w-[41px] pt-px tracking-[-0.5px]">Layout2</span>
      <Slash />
      <Svg w={11} h={11} className="ml-[8px] mr-[9px]"><path d="M5.5 0V11M0 5.5H11" stroke="#eceef0" strokeWidth="1.7" /></Svg>
      <Slash />
    </div>
  );
}

function Cell({ className, children, on = false }: { className: string; children: ReactNode; on?: boolean }) {
  return <div className={`flex h-full shrink-0 items-center justify-center ${on ? 'bg-[#5285bd]' : 'bg-[#3b4453]'} ${className}`}>{children}</div>;
}

function Person({ extra }: { extra?: ReactNode }) {
  return <Svg w={15} h={14}><path d="M7 0 8.5 4V7L12.5 13 7 10.5 1.5 13 5.5 7V4Z" fill="#d9dde2" />{extra}</Svg>;
}

function StatusBar() {
  return (
    <div className="mt-[4px] flex h-[21px] pl-[3px] text-[#e3e6ea]">
      <div className="w-[759px] bg-[#3b4453]" />
      <Cell className="ml-[4px] w-[40px] pt-px text-[10.5px] tracking-[-0.3px]">MODEL</Cell>
      <Cell on className="ml-[2px] w-[20px]"><Svg w={13} h={13}><path d="M3 0V13M6.5 0V13M10 0V13M0 3H13M0 6.5H13M0 10H13" stroke="#fff" strokeWidth=".9" /></Svg></Cell>
      <Cell className="w-[20px]"><Svg w={11} h={11}><path d="M1.2 0V11M5.5 0V11M9.8 0V11" stroke="#d9dde2" strokeWidth="1.8" strokeDasharray="1.8 2.8" /></Svg></Cell>
      <Cell className="w-[13px]"><Caret big /></Cell>
      <Cell className="ml-[2px] w-[20px]"><Svg w={14} h={14}><path d="M1.5 0V12.5H14M1.5 9H5V12.5" stroke="#aeb5be" /></Svg></Cell>
      <Cell className="w-[20px]"><Svg w={15} h={14}><circle cx="7" cy="7" r="5" stroke="#aeb5be" /><path d="M7 7H14M7 7 12 2.5M8.5 5.7V8.5" stroke="#aeb5be" /></Svg></Cell>
      <Cell className="w-[14px]"><Caret big /></Cell>
      <Cell className="w-[20px]"><Svg w={13} h={14}><path d="m1 1 11 12M6.5 1V7M6.5 7V13" stroke="#9aa2ad" /><path d="M5 6H9V9H6Z" fill="#9aa2ad" /></Svg></Cell>
      <Cell className="w-[14px]"><Caret big /></Cell>
      <Cell on className="ml-px w-[19px]"><Svg w={14} h={13}><path d="M.5 11 12 1M.5 11H14" stroke="#d3e2f2" /><path d="M5 6.8 7.5 9.5" stroke="#d3e2f2" /></Svg></Cell>
      <Cell on className="ml-px w-[19px]"><Svg w={15} h={15}><rect x="3" y="3" width="10" height="10" stroke="#b9d3ee" /><rect x=".8" y=".8" width="4" height="4" fill="#5285bd" stroke="#fff" /></Svg></Cell>
      <Cell className="w-[14px]"><Caret big /></Cell>
      <Cell className="w-[20px]"><Svg w={13} h={12}><path d="M0 1H4.5M0 4H4.5M0 7.5H4.5M0 10.8H4.5" stroke="#d9dde2" /><path d="M6 1H13M6 10.8H13" stroke="#d9dde2" strokeWidth="1.2" /><path d="M6 4H13M6 7.5H13" stroke="#d9dde2" strokeWidth="2" /></Svg></Cell>
      <Cell on className="ml-[3px] w-[19px]"><Person extra={<circle cx="11.5" cy="3" r="2.3" stroke="#b9d9f5" />} /></Cell>
      <Cell className="w-[20px]"><Person extra={<path d="m9 5 3-5-1 3h3l-4 4" fill="#d9dde2" />} /></Cell>
      <Cell className="w-[20px]"><Person /></Cell>
      <Cell className="w-[29px] gap-[4px] pl-px"><span className="pt-px tracking-[-0.7px]">1:1</span><Caret big /></Cell>
      <Cell className="ml-px w-[22px]">
        <Svg w={14} h={14}>
          <g stroke="#e3e6ea" strokeWidth="2.4">{[0, 45, 90, 135].map((a) => <path key={a} d="M.5 7H13.5" transform={`rotate(${a} 7 7)`} />)}</g>
          <circle cx="7" cy="7" r="4.6" fill="#e3e6ea" /><circle cx="7" cy="7" r="2" fill="#3b4453" />
        </Svg>
      </Cell>
      <Cell className="w-[13px]"><Caret big /></Cell>
      <Cell className="ml-px w-[17px]"><Svg w={13} h={13}><path d="M6.5 0V13M0 6.5H13" stroke="#eceef0" strokeWidth="1.7" /></Svg></Cell>
      <Cell className="ml-[2px] w-[24px]"><Svg w={15} h={15}><rect x="1" y="1" width="5" height="5" stroke="#aeb5be" /><circle cx="11" cy="7.5" r="3" stroke="#aeb5be" /><path d="M5.5 9 2.5 14H8.5Z" stroke="#aeb5be" /></Svg></Cell>
      <Cell className="ml-px w-[20px]"><Svg w={17} h={16}><path d="M2 2.5 4 1H14V10L12 12H2Z" fill="#2e6cb1" /><path d="M2 6.5H14M6 1.5V12M10 1.5V12" stroke="#8fbde8" strokeWidth=".7" /><path d="M0 9H6V14H0Z" fill={GOLD} /><path d="m7 11 3 3.5L16 7.5" stroke="#57b947" strokeWidth="2.4" /></Svg></Cell>
      <Cell className="w-[20px]"><Svg w={14} h={15}><path d="M2.5 1H13V4H11.5V13H2.5Z" fill="#dcdfe3" /><path d="M0 11H8V14H1Z" fill="#f0f1f3" /><path d="M8 2 4.5 7H7L5.5 11 9.5 5.5H7Z" fill="#f08a2c" /></Svg></Cell>
      <Cell className="ml-[2px] w-[20px]"><Svg w={14} h={11}><rect x=".5" y=".5" width="13" height="10" stroke="#c3c8cf" /><path d="M8.5 2.5H11.5V5.5M11.5 2.5 9 5M2.5 5.5V8.5H5.5M2.5 8.5 5 6" stroke="#c3c8cf" /></Svg></Cell>
      <Cell className="w-[17px]"><Svg w={13} h={12}><path d="M0 1.5H13M0 6H13M0 10.5H13" stroke="#e3e6ea" strokeWidth="1.6" /></Svg></Cell>
    </div>
  );
}

/* ---------- windows taskbar ---------- */

function Task({ children, active = false }: { children: ReactNode; active?: boolean }) {
  return <div className={`flex h-full w-[41.5px] shrink-0 items-center justify-center ${active ? 'bg-[#f0f5f9]' : ''}`}>{children}</div>;
}

function Taskbar() {
  return (
    <div className="flex h-[32px] items-center border-t border-[#3d8fae] bg-gradient-to-r from-[#cbe6ee] to-[#d8e3f1] pt-[2px] text-[#1c1f24]">
      <div className="flex w-[39px] justify-center pr-[3px]">
        <Svg w={14} h={14}><path d="M0 2 6 1.2V6.6H0ZM6.8 1 14 0V6.6H6.8ZM0 7.4H6V12.8L0 12ZM6.8 7.4H14V14L6.8 13Z" fill="#111" /></Svg>
      </div>
      <div className="flex h-full w-[286px] items-center bg-white pl-[9px]">
        <Svg w={14} h={14}><circle cx="8.5" cy="5.3" r="4.6" stroke="#333" strokeWidth="1.1" /><path d="M5.3 8.6.5 13.5" stroke="#333" strokeWidth="1.2" /></Svg>
        <span className="ml-[10px] pt-px text-[12px] tracking-[-0.08px] text-[#4b4d50]">Type here to search</span>
        <Svg w={61} h={29} className="ml-auto self-end">
          <path d="M0 29C7 17 22 12 38 11C52 10 60 14 61 19V29Z" fill="#cf1b74" /><path d="M0 29C10 20 24 15 38 14C48 14 57 17 58 29Z" fill="#3da42c" />
          <path d="M17 29C25 22 42 20 50 27L46 29Z" fill="#8fd84a" /><path d="M23 18 40 26M30 29 40 16 52 23" stroke="#eaffdf" strokeWidth=".9" />
          <path d="M34 0V23M44 3V24M34 15H44" stroke="#c9a7cc" strokeWidth="1.8" />
          <ellipse cx="14" cy="8" rx="9.5" ry="5.5" transform="rotate(-32 14 8)" fill="#8d5289" /><ellipse cx="13.5" cy="7.5" rx="7" ry="2" transform="rotate(-32 14 8)" fill="#e3bce3" />
          <circle cx="3" cy="4" r="1.7" fill="#6fcfc6" /><circle cx="26" cy="10.5" r="2" fill="#f0a32a" /><path d="m49 2 6 7M55 3 48 8" stroke="#c985dd" strokeWidth="2" />
        </Svg>
      </div>
      <Task><Svg w={14} h={14}><circle cx="7" cy="7" r="5.3" stroke="#111" strokeWidth="2" /></Svg></Task>
      <Task><Svg w={15} h={14}><path d="M1 0V3H9V0M1 14V11H9V14M1 5H9V9H1ZM13 0V4M13 7V14" stroke="#333" /><circle cx="13" cy="4.5" r="1.2" fill="#333" /></Svg></Task>
      <Task><Svg w={17} h={17}><path d="M8.5.5A8 8 0 1 1 4.7 15.6L.5 16.7 1.6 12.7A8 8 0 0 1 8.5.5Z" fill="#f3fbf4" /><circle cx="8.5" cy="8.5" r="6.9" fill="#2cb742" /><path d="M5.5 5C4.6 6.2 5 8.3 7 10.2C9.2 12.3 11.5 12.4 12.3 11.1L12 10 10.2 9.2 9.3 10.2C8 9.7 7.2 8.9 6.7 7.7L7.4 6.8 6.7 5Z" fill="#fff" /></Svg></Task>
      <Task>
        <Svg w={20} h={20}>
          <path d="M0 10C0 4.5 4.5 0 10 0C16 0 20 4 20 8.5C20 12 17 13.5 14 13.5C12 13.5 11.5 12.5 12.3 11.5C13.5 9.5 12 6.5 8.5 6.5C4.5 6.5 1 8.5 0 10Z" fill="#36bfa0" />
          <path d="M0 10C1 6 6 5 9 6.5C6 8 5 15 12 17C15 17.8 17.5 16.5 19 15.3C17 18.5 13.5 20 10 20C4.5 20 0 15.5 0 10Z" fill="#1a6fc0" /><path d="M0 10C1 5 6 3.2 9.5 4.4C12 5.2 13 7 13 8.5C11.5 6.3 8.5 6 6 7.3C3 9 3 14 6 19C2.5 17.5 0 14 0 10Z" fill="#2a90dd" />
        </Svg>
      </Task>
      <Task><Svg w={19} h={17}><path d="M1 1H8L10 3H18.5V15H1Z" fill="#eab440" /><path d="M1 5H18.5V16H1Z" fill="#fbd768" /><path d="M4 16V10H16V16H13V12.5H7V16Z" fill="#3c94d8" /></Svg></Task>
      <Task><Svg w={20} h={19}><path d="M0 6.5 10 0 20 6.5V19H0Z" fill="#1469ae" /><path d="M2 6H18V12H2Z" fill="#f4f7fa" /><path d="M0 7 10 13.5 20 7V19H0Z" fill="#2ba1e6" /><path d="M0 19 10 12 20 19Z" fill="#40b7f0" /></Svg></Task>
      <Task><Svg w={19} h={19}><ellipse cx="9" cy="6.5" rx="8.5" ry="5.5" transform="rotate(-15 9 6.5)" fill="#f0e9ee" stroke="#d45a62" /><path d="m13 2-3 11M6 7 15 12" stroke="#868d96" strokeWidth="1.4" /><circle cx="10.5" cy="16" r="2.2" stroke="#2a7fd0" strokeWidth="1.5" /><circle cx="16" cy="13.5" r="2.2" stroke="#2a7fd0" strokeWidth="1.5" /></Svg></Task>
      <Task><Svg w={18} h={18}><rect x="9" y="2.5" width="8.5" height="13" fill="#fff" stroke="#2b5797" /><path d="M11 5H16M11 7.5H16M11 10H16M11 12.5H16" stroke="#2b5797" /><path d="M0 2 11 0V18L0 16Z" fill="#2b5797" /><text x="5.5" y="12.2" fontSize="9" fontWeight="700" textAnchor="middle" fill="#fff" fontFamily="Liberation Sans, sans-serif">W</text></Svg></Task>
      <Task><Svg w={19} h={17}><path d="M6 1 16 2 12 13 0 12Z" fill="#78b9c4" /><path d="M6 1 16 2 14 7 3.5 6Z" fill="#b9dfe4" /><path d="M16 2 18.5 3 17 16 12 13Z" fill="#51646b" /><path d="M0 12 12 13 17 16 5 14.5Z" fill="#e9f0f2" /></Svg></Task>
      <Task><Svg w={19} h={19}><rect width="19" height="19" fill="#1f74cb" /><path d="M0 14 6.5 6.5 14 14.5 16 12 19 15V19H0Z" fill="#0d3c78" /><circle cx="13" cy="4.8" r="1.8" fill="#fff" /></Svg></Task>
      <Task active>
        <Svg w={18} h={20}><path d="M0 1 2 0V17L0 16Z" fill="#f0839d" /><rect x="1" width="17" height="14" fill="#e51050" /><rect x="2" y="14" width="16" height="6" fill="#8a0b31" /><text x="9.7" y="11.5" fontSize="11.5" fontWeight="700" textAnchor="middle" fill="#fff" fontFamily="Liberation Sans, sans-serif">A</text><text x="10" y="18.8" fontSize="4.7" fontWeight="700" textAnchor="middle" fill="#fff" fontFamily="Liberation Sans, sans-serif">CAD</text></Svg>
      </Task>
      <Task><Svg w={17} h={17}><circle cx="8.5" cy="8.5" r="8.3" fill="#1e1f22" /><g stroke="#c9cbce" strokeWidth="1.3"><path d="M8.5 8.5C5.5 8 4.5 5.5 6 3M8.5 8.5C10.5 6 13 6.3 14.3 8.5M8.5 8.5C9.5 11.5 8 13.5 5 13.3" /></g></Svg></Task>
      <Svg w={19} h={17} className="ml-[71px]"><circle cx="8.5" cy="8.3" r="8" fill="#f3942a" /><path d="M7 15.5C4 15.5 4.5 11 8 11.3C9 7.5 14.5 8 14.5 11.5C19.5 11.3 19.5 15.5 16 15.5Z" fill="#dce8f8" /></Svg>
      <span className="ml-[6px] w-[33px] pt-px text-[12px] tracking-[-0.4px]">26°C</span>
      <span className="w-[83px] pt-px text-[12px] tracking-[-0.3px]">Mostly sunny</span>
      <Svg w={11} h={7}><path d="m.5 6 5-5 5 5" stroke="#222" strokeWidth="1.1" /></Svg>
      <Svg w={13} h={9} className="ml-[9px]"><rect x=".5" y="1" width="11" height="7" stroke="#222" /><rect x="1.5" y="2" width="6.5" height="5" fill="#222" /><path d="M12.5 3V6" stroke="#222" /></Svg>
      <Svg w={12} h={13} className="ml-[9px]"><rect x="1" y="3" width="7" height="7" rx="1" stroke="#222" /><path d="M8 5.5 11 4V9L8 7.5M2.5 1H6.5M2.5 12H6.5" stroke="#222" /></Svg>
      <Svg w={9} h={14} className="ml-[8px]"><rect x="2" width="5" height="9.5" fill="#111" /><path d="M.5 7V10.5H8.5V7M4.5 10.5V13.5M2 13.5H7" stroke="#111" /></Svg>
      <Svg w={12} h={11} className="ml-[10px]"><path d="M1 10.5C1 5 5 1 11 1M4 10.5C4 7 7 4 11 4M7 10.5C7 8.5 8.5 7 11 7" stroke="#333" /><circle cx="10" cy="9.5" r="1.2" fill="#333" /></Svg>
      <Svg w={14} h={12} className="ml-[7px]"><path d="M.5 4H3L6 1V11L3 8H.5ZM8 4.5C8.8 5.3 8.8 6.7 8 7.5M10 3C11.7 4.6 11.7 7.4 10 9M12 1.5C14.3 4 14.3 8 12 10.5" stroke="#333" /></Svg>
      <span className="ml-[8px] w-[29px] pt-px text-[10px] tracking-[-0.4px]">ENG</span>
      <div className="flex w-[48px] flex-col items-center text-[10px] leading-[15px] tracking-[-0.3px]">
        <span>5:40 PM</span><span>10/9/2022</span>
      </div>
      <Svg w={23} h={22} className="ml-[12px]">
        <path d="M1 3H14V14H6L3 17V14H1Z" fill="#111" /><path d="M3 6H12M3 9H12" stroke="#d8e3f1" strokeWidth="1.1" />
        <circle cx="13.5" cy="15" r="7" fill="#d3d6dc" stroke="#8c9097" strokeWidth=".7" /><text x="13.5" y="18.5" fontSize="9.5" textAnchor="middle" fill="#111" fontFamily="Open Sans, sans-serif">22</text>
      </Svg>
    </div>
  );
}

export default function App() {
  return (
    <div className="h-[720px] w-[1280px] overflow-hidden whitespace-nowrap bg-black pl-[3px] pr-[2px] font-['Open_Sans','Noto_Sans',sans-serif] text-[10px] tracking-[-0.4px]">
      <div className="flex h-full w-[1275px] flex-col border-l border-t-2 border-[#c9bd2c] bg-[#222933]">
        <TitleBar />
        <MenuBar />
        <div className="-mt-[2px]"><RibbonTabs /></div>
        <Ribbon />
        <QuickAccess />
        <FileTabs />
        <div className="h-[4px] shrink-0 bg-[#3b4453]" />
        <Viewport />
        <div className="h-[4px] shrink-0 bg-[#3b4453]" />
        <LayoutTabs />
        <StatusBar />
        <div className="mt-auto"><Taskbar /></div>
      </div>
    </div>
  );
}
